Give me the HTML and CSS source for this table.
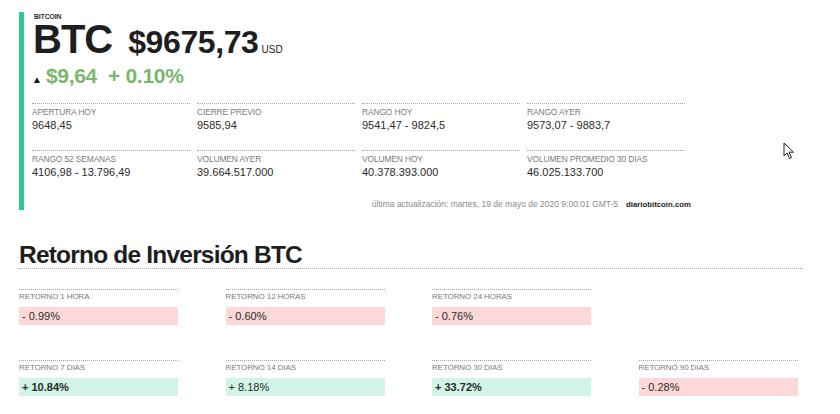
FILE: index.html
```html
<!DOCTYPE html>
<html lang="es">
<head>
<meta charset="utf-8">
<title>BTC</title>
<link rel="stylesheet" href="styles.css">
</head>
<body>
<section class="quote">
  <div class="coin">BITCOIN</div>
  <div class="price-row">
    <span class="ticker">BTC</span>
    <span class="price">$9675,73</span>
    <span class="cur">USD</span>
  </div>
  <div class="change-row">
    <span class="tri">▲</span>
    <span class="chg">$9,64</span>
    <span class="chg">+ 0.10%</span>
  </div>
  <div class="stats">
    <div class="stat"><div class="lbl">APERTURA HOY</div><div class="val">9648,45</div></div>
    <div class="stat"><div class="lbl">CIERRE PREVIO</div><div class="val">9585,94</div></div>
    <div class="stat"><div class="lbl">RANGO HOY</div><div class="val">9541,47 - 9824,5</div></div>
    <div class="stat"><div class="lbl">RANGO AYER</div><div class="val">9573,07 - 9883,7</div></div>
    <div class="stat"><div class="lbl">RANGO 52 SEMANAS</div><div class="val">4106,98 - 13.796,49</div></div>
    <div class="stat"><div class="lbl">VOLUMEN AYER</div><div class="val">39.664.517.000</div></div>
    <div class="stat"><div class="lbl">VOLUMEN HOY</div><div class="val">40.378.393.000</div></div>
    <div class="stat"><div class="lbl">VOLUMEN PROMEDIO 30 DIAS</div><div class="val">46.025.133.700</div></div>
  </div>
  <div class="foot">
    <span class="upd">última actualización: martes, 19 de mayo de 2020 9:00:01 GMT-5</span>
    <span class="src">diariobitcoin.com</span>
  </div>
</section>

<section class="returns">
  <h2 class="title">Retorno de Inversión BTC</h2>
  <div class="rgrid">
    <div class="ret"><div class="rlbl">RETORNO 1 HORA</div><div class="box neg">- 0.99%</div></div>
    <div class="ret"><div class="rlbl">RETORNO 12 HORAS</div><div class="box neg">- 0.60%</div></div>
    <div class="ret"><div class="rlbl">RETORNO 24 HORAS</div><div class="box neg">- 0.76%</div></div>
    <div class="ret empty"></div>
    <div class="ret"><div class="rlbl">RETORNO 7 DIAS</div><div class="box pos strong">+ 10.84%</div></div>
    <div class="ret"><div class="rlbl">RETORNO 14 DIAS</div><div class="box pos">+ 8.18%</div></div>
    <div class="ret"><div class="rlbl">RETORNO 30 DIAS</div><div class="box pos strong">+ 33.72%</div></div>
    <div class="ret"><div class="rlbl">RETORNO 90 DIAS</div><div class="box neg">- 0.28%</div></div>
  </div>
</section>

<svg class="cursor" width="12" height="18" viewBox="0 0 12 18" aria-hidden="true">
  <path d="M1 1 L1 14 L4 11 L6.5 16.5 L8.5 15.6 L6 10.2 L10.5 10.2 Z" fill="#fff" stroke="#222" stroke-width="1" stroke-linejoin="round"/>
</svg>
</body>
</html>
```

FILE: styles.css
```css
* { box-sizing: border-box; }
html, body { margin: 0; padding: 0; background: #fff; }
body {
  width: 840px;
  height: 414px;
  overflow: hidden;
  position: relative;
  font-family: "Liberation Sans", Arial, sans-serif;
  color: #222;
}

.quote {
  margin: 12px 0 0 19px;
  border-left: 5px solid #2bcb8c;
  padding-left: 8px;
  height: 198px;
}
.coin {
  font-size: 7px;
  line-height: 7px;
  font-weight: bold;
  color: #333;
  letter-spacing: -0.2px;
  padding-left: 2px;
  padding-top: 1px;
}
.price-row {
  display: flex;
  align-items: baseline;
  height: 36px;
  line-height: 36px;
  margin-top: 1px;
}
.ticker {
  font-size: 40px;
  font-weight: bold;
  letter-spacing: -1px;
  color: #1e1e1e;
  margin-left: 1px;
}
.price {
  font-size: 32px;
  font-weight: bold;
  letter-spacing: -0.4px;
  color: #1e1e1e;
  margin-left: 16px;
}
.cur {
  font-size: 10px;
  color: #222;
  margin-left: 3px;
}
.change-row {
  display: flex;
  align-items: baseline;
  margin-top: 7px;
  height: 24px;
  line-height: 24px;
}
.tri {
  font-size: 10px;
  color: #111;
  margin-left: 0;
  margin-right: 4px;
}
.chg {
  font-size: 21px;
  font-weight: bold;
  color: #7ab66c;
  margin-right: 11px;
  letter-spacing: -0.3px;
}

.stats {
  display: grid;
  grid-template-columns: repeat(4, 158px);
  column-gap: 7px;
  row-gap: 18px;
  margin-top: 15px;
}
.stat {
  border-top: 1px dotted #a5a5a5;
  padding-top: 2px;
}
.lbl {
  font-size: 8.4px;
  line-height: 12px;
  color: #7a7a7a;
  letter-spacing: -0.1px;
}
.val {
  font-size: 11px;
  line-height: 14px;
  color: #2c2c2c;
}
.foot {
  margin-top: 20px;
  width: 659px;
  display: flex;
  justify-content: flex-end;
  align-items: baseline;
  font-size: 8.5px;
  line-height: 10px;
}
.upd { color: #8a8a8a; }
.src { font-weight: bold; color: #222; margin-left: 8px; font-size: 7.8px; }

.returns {
  margin: 31px 0 0 19px;
  width: 784px;
}
.title {
  margin: 0;
  font-size: 24.5px;
  line-height: 27px;
  font-weight: bold;
  color: #1e1e1e;
  letter-spacing: -0.8px;
  border-bottom: 1px dotted #a5a5a5;
}
.rgrid {
  display: grid;
  grid-template-columns: repeat(4, 159px);
  column-gap: 47.5px;
  row-gap: 35px;
  margin-top: 20px;
}
.ret {
  border-top: 1px dotted #a5a5a5;
  padding-top: 1px;
}
.ret.empty { border-top: none; }
.rlbl {
  font-size: 8px;
  line-height: 12px;
  color: #7a7a7a;
  letter-spacing: -0.1px;
}
.box {
  margin-top: 4px;
  height: 18px;
  line-height: 18px;
  padding-left: 3px;
  font-size: 11px;
  color: #2a2a2a;
}
.neg { background: #fdd8d8; }
.pos { background: #d1f4e6; }
.strong { font-weight: bold; }

.cursor {
  position: absolute;
  left: 783px;
  top: 142px;
}
```
